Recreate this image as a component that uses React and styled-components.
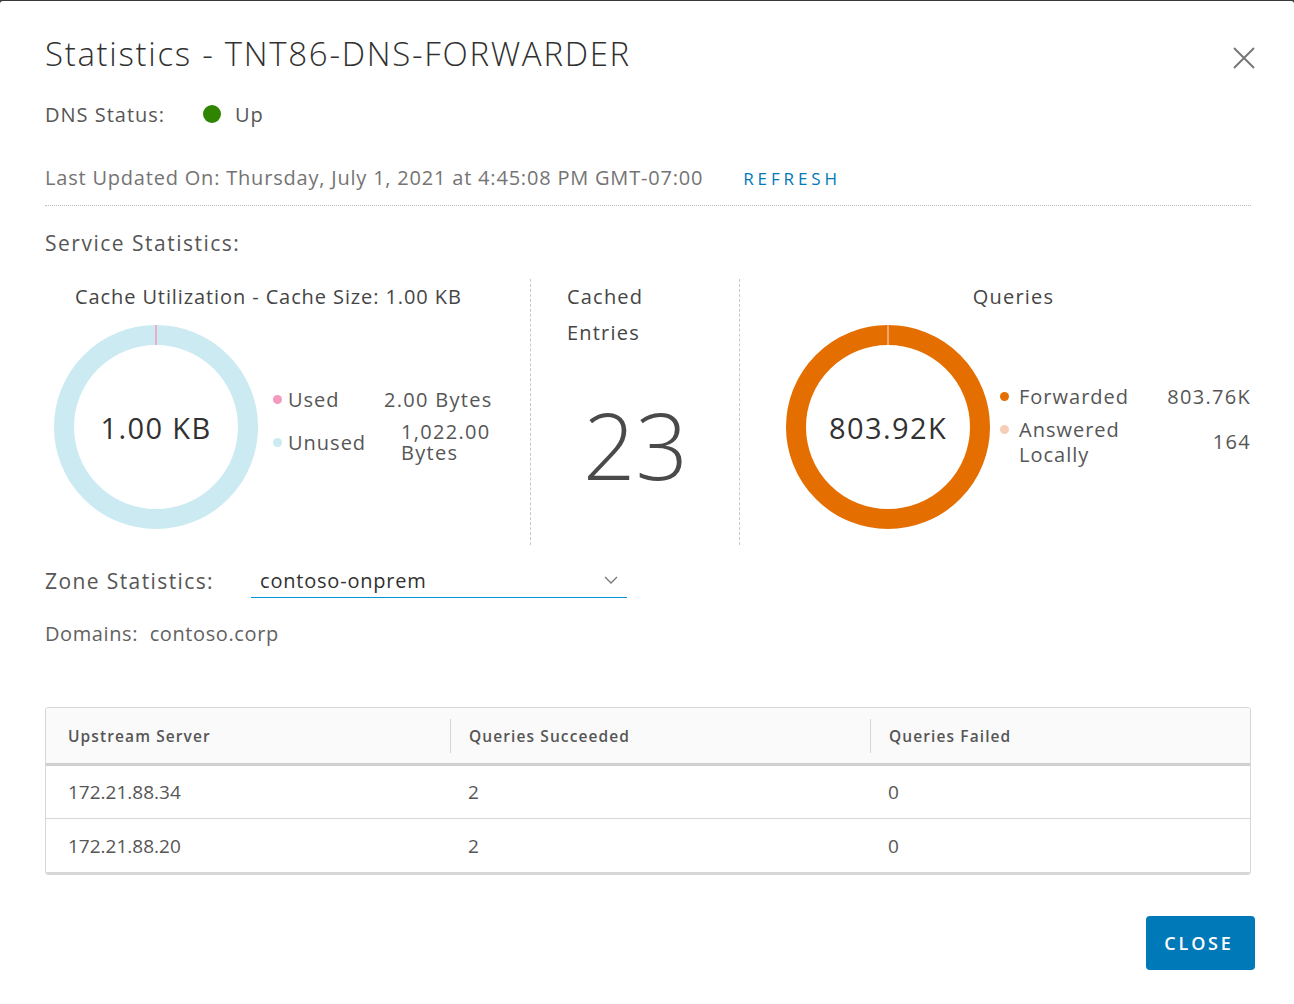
import React from "react";
import styled, { createGlobalStyle } from "styled-components";

const Global = createGlobalStyle`
  html, body { margin: 0; padding: 0; background: #3a3a3a; }
  body { font-family: "Open Sans", "Noto Sans", sans-serif; }
  * { box-sizing: border-box; }
`;

const Modal = styled.div`
  margin-top: 1px;
  background: #fff;
  border-radius: 3px 3px 0 0;
  min-height: 1003px;
  padding: 28px 39px 0 45px;
  color: #565656;
`;

const Header = styled.div`
  display: flex;
  align-items: center;
  justify-content: space-between;
  height: 48px;
`;

const Title = styled.h1`
  margin: 0;
  font-size: 33px;
  font-weight: 300;
  color: #313131;
  letter-spacing: 1.7px;
`;

const CloseX = styled.button`
  border: 0;
  background: none;
  padding: 0;
  margin-top: 10px;
  margin-right: -1px;
  width: 24px;
  height: 24px;
  cursor: pointer;
`;

const StatusRow = styled.div`
  display: flex;
  align-items: center;
  margin-top: 22px;
  height: 30px;
  font-size: 20px;
  letter-spacing: 1px;
`;

const Label = styled.span`
  width: 158px;
`;

const Dot = styled.span`
  width: ${(p) => p.size || 10}px;
  height: ${(p) => p.size || 10}px;
  border-radius: 50%;
  background: ${(p) => p.color};
  display: inline-block;
  flex-shrink: 0;
`;

const UpText = styled.span`
  margin-left: 14px;
`;

const UpdatedRow = styled.div`
  display: flex;
  align-items: center;
  margin-top: 33px;
  height: 30px;
  color: #747474;
  font-size: 20px;
  letter-spacing: 0.8px;
`;

const RefreshLink = styled.a`
  margin-left: 40px;
  margin-top: 3px;
  color: #0079b8;
  font-size: 17px;
  letter-spacing: 3.9px;
`;

const Divider = styled.div`
  margin-top: 13px;
  border-top: 1px dotted #bdbdbd;
  width: 1206px;
`;

const SectionTitle = styled.div`
  margin-top: 23px;
  font-size: 21px;
  letter-spacing: 1.5px;
  color: #565656;
`;

const StatsRow = styled.div`
  display: flex;
  margin-top: 22px;
  height: 266px;
  width: 1206px;
`;

const CacheCol = styled.div`
  width: 485px;
`;

const EntriesCol = styled.div`
  width: 209px;
  border-left: 1px dashed #c8c8c8;
  padding-left: 36px;
`;

const QueriesCol = styled.div`
  flex: 1;
  border-left: 1px dashed #c8c8c8;
  padding-left: 36px;
`;

const ChartTitle = styled.div`
  font-size: 20px;
  letter-spacing: ${(p) => p.ls ?? 0.9}px;
  color: #454545;
  line-height: 36px;
  padding-left: ${(p) => p.indent || 0}px;
  text-align: ${(p) => (p.center ? "center" : "left")};
`;

const ChartBody = styled.div`
  display: flex;
  align-items: center;
  margin-top: 10px;
  margin-left: ${(p) => p.offset || 0}px;
`;

const DonutWrap = styled.div`
  position: relative;
  width: 204px;
  height: 204px;
  flex-shrink: 0;
`;

const DonutLabel = styled.div`
  position: absolute;
  inset: 0;
  display: flex;
  align-items: center;
  justify-content: center;
  font-size: 29px;
  letter-spacing: 1.4px;
  color: #313131;
`;

const Legend = styled.div`
  display: grid;
  grid-template-columns: ${(p) => p.cols};
  row-gap: ${(p) => p.rowGap || 8}px;
  margin-left: ${(p) => p.gap || 10}px;
  margin-top: ${(p) => p.top || 0}px;
  font-size: 20px;
  letter-spacing: 1px;
  color: #565656;
  align-items: center;
  flex: ${(p) => (p.grow ? 1 : "none")};
`;

const LegendDot = styled(Dot)`
  align-self: ${(p) => (p.top ? "start" : "center")};
  margin-top: ${(p) => (p.top ? 8 : 0)}px;
`;

const LegendName = styled.div`
  line-height: 25px;
`;

const LegendValue = styled.div`
  line-height: 21px;
  letter-spacing: 1.3px;
  text-align: ${(p) => p.align || "left"};
  padding-left: ${(p) => p.indent || 0}px;
`;

const ValueLine = styled.div`
  line-height: 21px;
  height: 21px;
  overflow: visible;
`;

const BigNumber = styled.div`
  font-size: 92px;
  font-weight: 300;
  color: #4a4a4a;
  margin-top: 44px;
  padding-left: 16px;
  line-height: 100px;
`;

const ZoneRow = styled.div`
  display: flex;
  align-items: flex-end;
  margin-top: 20px;
`;

const ZoneLabel = styled.span`
  width: 206px;
  font-size: 21px;
  letter-spacing: 1.4px;
  line-height: 29px;
  padding-bottom: 2px;
`;

const SelectBox = styled.div`
  width: 376px;
  border-bottom: 1px solid #0095d3;
  display: flex;
  align-items: center;
  justify-content: space-between;
  padding: 0 9px 2px 9px;
  height: 33px;
  color: #313131;
  font-size: 20px;
  letter-spacing: 0.8px;
`;

const DomainRow = styled.div`
  margin-top: 22px;
  font-size: 20px;
  line-height: 27px;
  letter-spacing: 0.6px;
  color: #626262;
`;

const Table = styled.div`
  margin-top: 60px;
  width: 1206px;
  border: 1px solid #d7d7d7;
  border-radius: 3px;
  overflow: hidden;
`;

const THead = styled.div`
  display: grid;
  grid-template-columns: 404px 420px 1fr;
  background: #fafafa;
  border-bottom: 3px solid #d0d0d0;
  height: 58px;
  align-items: center;
`;

const Th = styled.div`
  font-size: 15.5px;
  font-weight: 600;
  letter-spacing: 1.1px;
  color: #565656;
  padding-left: ${(p) => (p.first ? 22 : 18)}px;
  border-left: ${(p) => (p.first ? "none" : "1px solid #d7d7d7")};
  height: 34px;
  display: flex;
  align-items: center;
`;

const TRow = styled.div`
  display: grid;
  grid-template-columns: 404px 420px 1fr;
  height: 53px;
  align-items: center;
  border-bottom: 1px solid #d7d7d7;
  &:last-child { border-bottom: 2px solid #d7d7d7; height: 55px; }
`;

const Td = styled.div`
  font-size: 19px;
  color: #565656;
  padding-left: ${(p) => (p.first ? 22 : 18)}px;
`;

const Footer = styled.div`
  display: flex;
  justify-content: flex-end;
  margin-top: 41px;
`;

const PrimaryButton = styled.button`
  width: 109px;
  height: 54px;
  background: #0079b8;
  color: #fff;
  border: 0;
  border-radius: 4px;
  font-family: inherit;
  font-size: 18px;
  font-weight: 600;
  letter-spacing: 2.8px;
  padding-left: 3px;
  cursor: pointer;
`;

function Donut({ color, slice, sliceColor, label }) {
  return (
    <DonutWrap>
      <svg width="204" height="204" viewBox="0 0 204 204">
        <circle cx="102" cy="102" r="92" fill="none" stroke={color} strokeWidth="20" />
        <line x1="102" y1="0" x2="102" y2="20" stroke={sliceColor} strokeWidth={slice} />
      </svg>
      <DonutLabel>{label}</DonutLabel>
    </DonutWrap>
  );
}

export default function App() {
  return (
    <>
      <Global />
      <Modal>
        <Header>
          <Title>Statistics - TNT86-DNS-FORWARDER</Title>
          <CloseX aria-label="close">
            <svg width="24" height="24" viewBox="0 0 24 24">
              <path d="M2 2 L22 22 M22 2 L2 22" stroke="#777" strokeWidth="2" fill="none" />
            </svg>
          </CloseX>
        </Header>

        <StatusRow>
          <Label>DNS Status:</Label>
          <Dot size={18} color="#2f8400" />
          <UpText>Up</UpText>
        </StatusRow>

        <UpdatedRow>
          <span>Last Updated On: Thursday, July 1, 2021 at 4:45:08 PM GMT-07:00</span>
          <RefreshLink>REFRESH</RefreshLink>
        </UpdatedRow>
        <Divider />

        <SectionTitle>Service Statistics:</SectionTitle>

        <StatsRow>
          <CacheCol>
            <ChartTitle indent={30}>Cache Utilization - Cache Size: 1.00 KB</ChartTitle>
            <ChartBody offset={9}>
              <Donut color="#cbeaf1" slice={1.5} sliceColor="#f49ac1" label="1.00 KB" />
              <Legend cols="15px 96px 116px" gap={15} top={-4} rowGap={9}>
                <LegendDot size={9} color="#f49ac1" />
                <LegendName>Used</LegendName>
                <LegendValue>2.00 Bytes</LegendValue>
                <LegendDot size={9} color="#cbeaf1" />
                <LegendName>Unused</LegendName>
                <LegendValue indent={17}>
                  <ValueLine>1,022.00</ValueLine>
                  <ValueLine>Bytes</ValueLine>
                </LegendValue>
              </Legend>
            </ChartBody>
          </CacheCol>

          <EntriesCol>
            <ChartTitle ls={1.2}>Cached</ChartTitle>
            <ChartTitle ls={1.2}>Entries</ChartTitle>
            <BigNumber>23</BigNumber>
          </EntriesCol>

          <QueriesCol>
            <ChartTitle center ls={1.2}>Queries</ChartTitle>
            <ChartBody offset={10}>
              <Donut color="#e46e00" slice={1} sliceColor="#fbe1d3" label="803.92K" />
              <Legend cols="19px auto 1fr" gap={10} top={-4} rowGap={8} grow>
                <LegendDot size={9} color="#e46e00" />
                <LegendName>Forwarded</LegendName>
                <LegendValue align="right">803.76K</LegendValue>
                <LegendDot size={9} color="#f8cdb8" top />
                <LegendName>Answered<br />Locally</LegendName>
                <LegendValue align="right">164</LegendValue>
              </Legend>
            </ChartBody>
          </QueriesCol>
        </StatsRow>

        <ZoneRow>
          <ZoneLabel>Zone Statistics:</ZoneLabel>
          <SelectBox>
            <span>contoso-onprem</span>
            <svg width="14" height="8" viewBox="0 0 14 8">
              <path d="M1 1 L7 7 L13 1" stroke="#777" strokeWidth="1.3" fill="none" />
            </svg>
          </SelectBox>
        </ZoneRow>

        <DomainRow>Domains:&nbsp; contoso.corp</DomainRow>

        <Table>
          <THead>
            <Th first>Upstream Server</Th>
            <Th>Queries Succeeded</Th>
            <Th>Queries Failed</Th>
          </THead>
          <TRow>
            <Td first>172.21.88.34</Td>
            <Td>2</Td>
            <Td>0</Td>
          </TRow>
          <TRow>
            <Td first>172.21.88.20</Td>
            <Td>2</Td>
            <Td>0</Td>
          </TRow>
        </Table>

        <Footer>
          <PrimaryButton>CLOSE</PrimaryButton>
        </Footer>
      </Modal>
    </>
  );
}
